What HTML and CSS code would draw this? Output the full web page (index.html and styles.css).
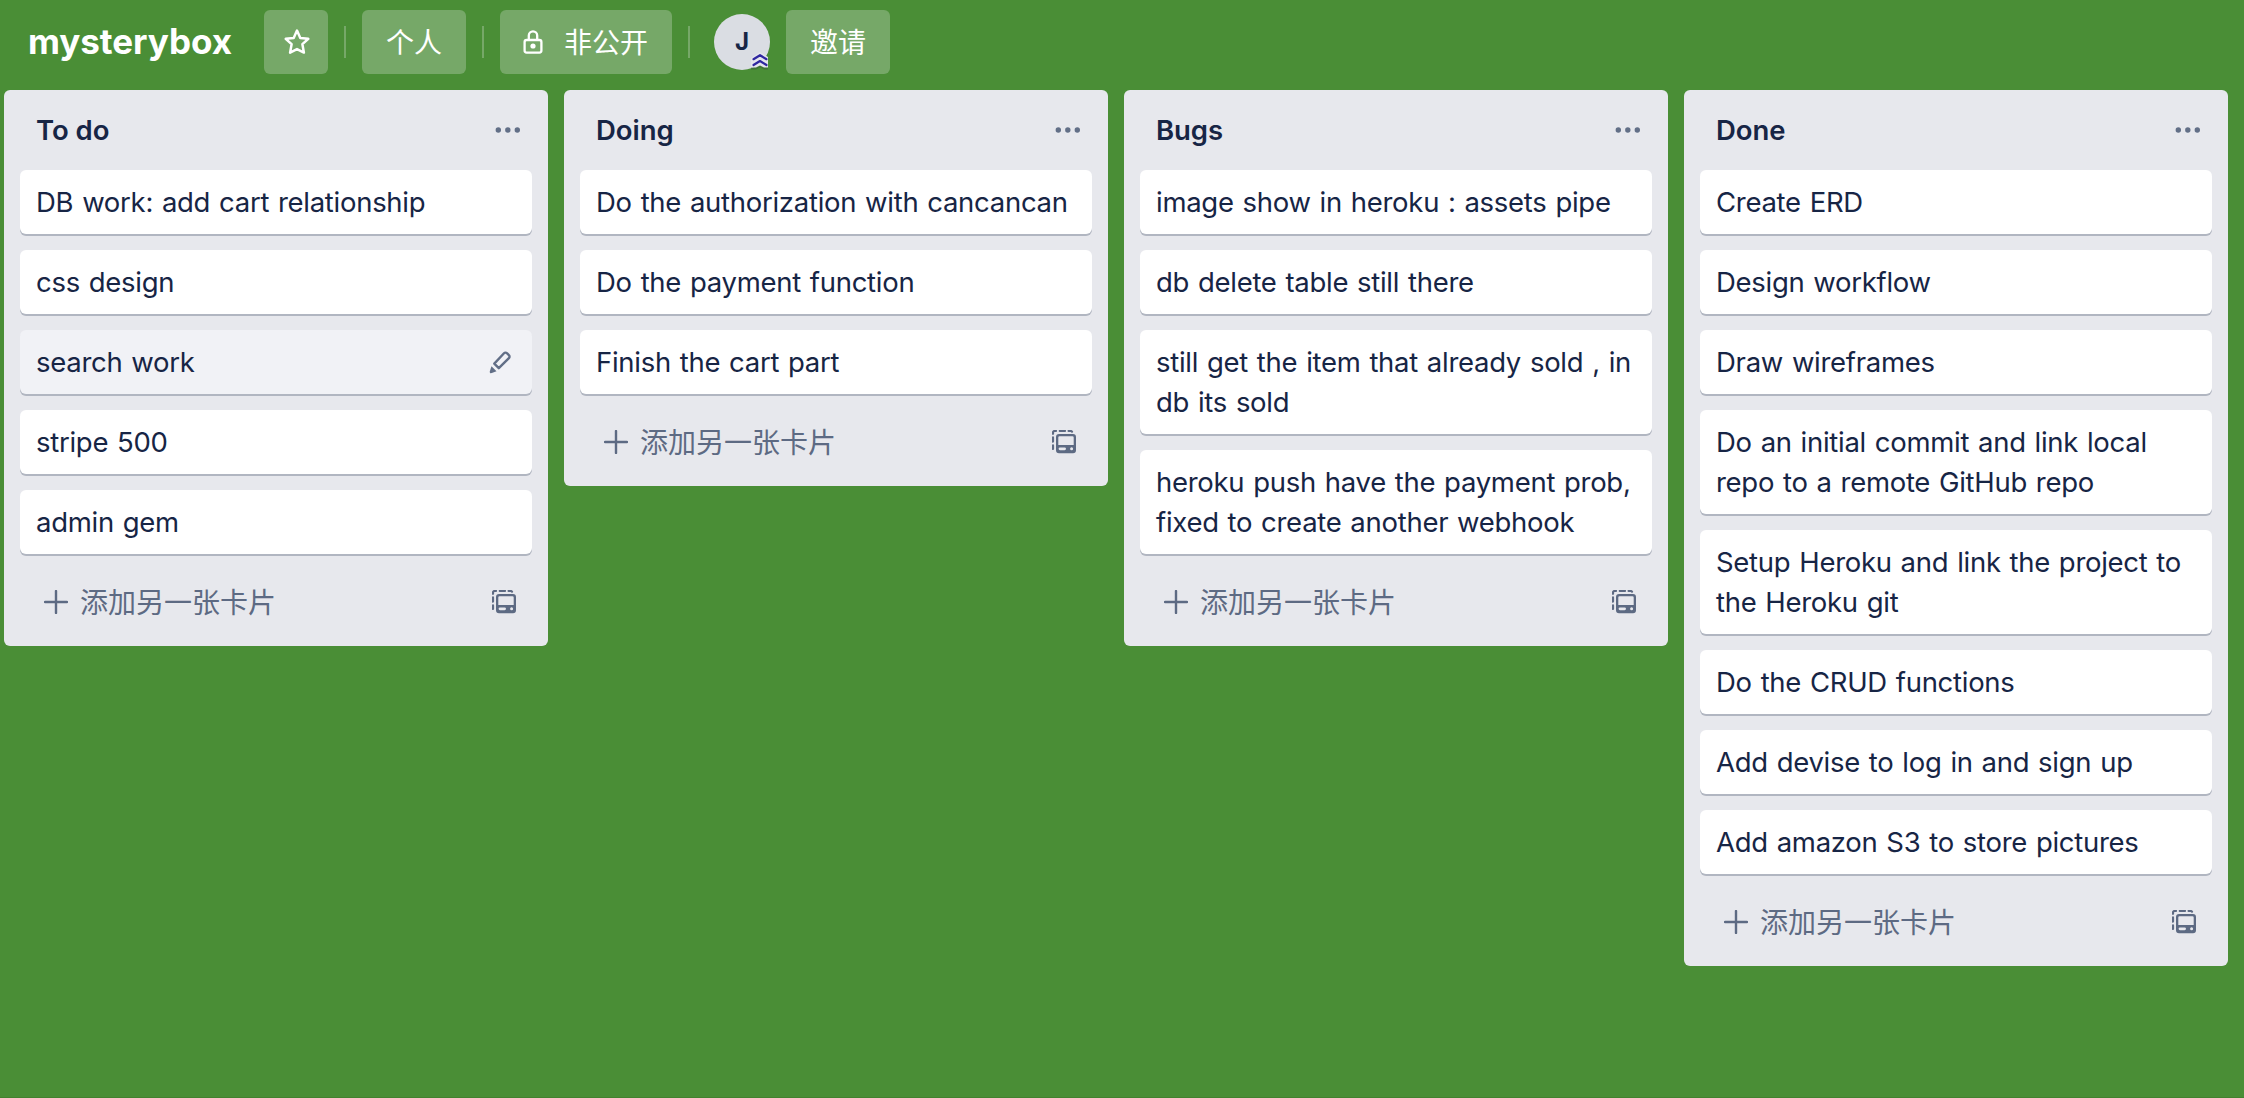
FILE: index.html
```html
<!DOCTYPE html>
<html lang="zh-CN">
<head>
<meta charset="utf-8">
<title>mysterybox</title>
<link rel="stylesheet" href="styles.css">
</head>
<body>
<svg class="sprite" aria-hidden="true">
  <symbol id="i-dots" viewBox="0 0 26 8"><circle cx="3.3" cy="4" r="2.7"/><circle cx="12.800" cy="4" r="2.7"/><circle cx="22.300" cy="4" r="2.7"/></symbol>
  <symbol id="i-plus" viewBox="0 0 24 24"><path d="M12 1v22M1 12h22" fill="none" stroke="currentColor" stroke-width="2.400" stroke-linecap="round"/></symbol>
  <symbol id="i-template" viewBox="0 0 24 24">
    <path fill-rule="evenodd" d="M7 4h14a3 3 0 0 1 3 3v13.300a3 3 0 0 1-3 3H7a3 3 0 0 1-3-3V7a3 3 0 0 1 3-3zM7.500 6.200A1.200 1.200 0 0 0 6.300 7.400v7.600h15.400V7.400A1.200 1.200 0 0 0 20.500 6.200zM8 17.400a1.400 1.400 0 0 0 0 2.800h4.600a1.400 1.400 0 0 0 0-2.800zM19.600 17.300a1.500 1.500 0 1 0 0 3 1.500 1.500 0 0 0 0-3z"/>
    <path d="M1 3.800V2.600A1.600 1.600 0 0 1 2.600 1H4M7.800 1h5.200M16.600 1h2.200a1.600 1.600 0 0 1 1.200.7M1 7.400v4.200M1 15.400v3.600" fill="none" stroke="currentColor" stroke-width="2.200" stroke-linecap="round"/>
  </symbol>
</svg>

<header class="board-header">
  <h1 class="board-name">mysterybox</h1>
  <button class="btn btn-star"><svg class="icon-star" viewBox="0 0 28 28"><path d="M14 2.600l3.300 7.300 8 .9-5.900 5.400 1.500 8.400-6.900-3.500-6.900 3.500 1.500-8.400-5.900-5.400 8-.9z" fill="none" stroke="currentColor" stroke-width="2.500" stroke-linejoin="round"/></svg></button>
  <span class="divider"></span>
  <button class="btn"><span class="label">个人</span></button>
  <span class="divider"></span>
  <button class="btn btn-private"><svg class="icon-lock" viewBox="0 0 20 26"><path d="M5.800 11V6.500a4.200 4.200 0 0 1 8.400 0V11" fill="none" stroke="currentColor" stroke-width="2.300"/><rect x="1.600" y="11" width="16.800" height="12.600" rx="2" fill="none" stroke="currentColor" stroke-width="2.300"/><circle cx="10" cy="17" r="2.600" fill="currentColor"/></svg><span class="label">非公开</span></button>
  <span class="divider"></span>
  <div class="avatar">J
    <svg class="avatar-badge" viewBox="0 0 20 18"><path class="badge-shade" d="M3 8L11 1l8 5v11.500h-4L11 15.500l-4 2H2V9z"/><path class="badge-plate" d="M2 6L11 0l8 5v10.500h-4L11 13.500l-4 2H2z"/><path class="badge-mark" d="M4.500 7.200L11 3.200l6.500 4M4.500 13L11 9l6.500 4"/></svg>
  </div>
  <button class="btn"><span class="label">邀请</span></button>
</header>

<main class="board">
  <section class="list">
    <div class="list-header"><h2>To do</h2><svg class="icon-dots"><use href="#i-dots"/></svg></div>
    <div class="cards">
      <article class="card">DB work: add cart relationship</article>
      <article class="card">css design</article>
      <article class="card card-hover">search work<svg class="icon-pencil" viewBox="0 0 24 24"><path d="M6.300 13.600L16 3.200a2 2 0 0 1 2.900 0l2 2a2 2 0 0 1 0 2.900L10.800 18.200z" fill="none" stroke="currentColor" stroke-width="2.400" stroke-linejoin="round"/><path d="M3.500 16.200l5 5-4.700 1.900c-1.400.5-2.400-.5-2-1.900z" fill="currentColor"/></svg></article>
      <article class="card">stripe 500</article>
      <article class="card">admin gem</article>
    </div>
    <div class="composer"><svg class="icon-plus"><use href="#i-plus"/></svg><span class="label">添加另一张卡片</span><svg class="icon-template"><use href="#i-template"/></svg></div>
  </section>

  <section class="list">
    <div class="list-header"><h2>Doing</h2><svg class="icon-dots"><use href="#i-dots"/></svg></div>
    <div class="cards">
      <article class="card">Do the authorization with cancancan</article>
      <article class="card">Do the payment function</article>
      <article class="card">Finish the cart part</article>
    </div>
    <div class="composer"><svg class="icon-plus"><use href="#i-plus"/></svg><span class="label">添加另一张卡片</span><svg class="icon-template"><use href="#i-template"/></svg></div>
  </section>

  <section class="list">
    <div class="list-header"><h2>Bugs</h2><svg class="icon-dots"><use href="#i-dots"/></svg></div>
    <div class="cards">
      <article class="card">image show in heroku : assets pipe</article>
      <article class="card">db delete table still there</article>
      <article class="card">still get the item that already sold , in<br>db its sold</article>
      <article class="card">heroku push have the payment prob,<br>fixed to create another webhook</article>
    </div>
    <div class="composer"><svg class="icon-plus"><use href="#i-plus"/></svg><span class="label">添加另一张卡片</span><svg class="icon-template"><use href="#i-template"/></svg></div>
  </section>

  <section class="list">
    <div class="list-header"><h2>Done</h2><svg class="icon-dots"><use href="#i-dots"/></svg></div>
    <div class="cards">
      <article class="card">Create ERD</article>
      <article class="card">Design workflow</article>
      <article class="card">Draw wireframes</article>
      <article class="card">Do an initial commit and link local<br>repo to a remote GitHub repo</article>
      <article class="card">Setup Heroku and link the project to<br>the Heroku git</article>
      <article class="card">Do the CRUD functions</article>
      <article class="card">Add devise to log in and sign up</article>
      <article class="card">Add amazon S3 to store pictures</article>
    </div>
    <div class="composer"><svg class="icon-plus"><use href="#i-plus"/></svg><span class="label">添加另一张卡片</span><svg class="icon-template"><use href="#i-template"/></svg></div>
  </section>
</main>
</body>
</html>
```
FILE: styles.css
```css
* { box-sizing: border-box; }

body {
  margin: 0;
  height: 1098px;
  overflow: hidden;
  background: #4a8e36;
  border-bottom: 1px solid #43812f;
  color: #172545;
  font: 27.5px/40px Inter, "Noto Sans CJK SC", sans-serif;
}

h1, h2 { margin: 0; }
svg { display: block; flex: none; fill: currentColor; }
.sprite { display: none; }

.board-header {
  display: flex;
  align-items: center;
  gap: 16px;
  height: 90px;
  padding: 0 28px 6px;
  color: #fff;
}
.board-name {
  width: 220px;
  padding-bottom: 2px;
  font-size: 35px;
  font-weight: 700;
  line-height: 40px;
  letter-spacing: -0.05px;
  white-space: nowrap;
}
.btn {
  display: flex;
  align-items: center;
  height: 64px;
  padding: 0 24px;
  border: 0;
  border-radius: 6px;
  background: #76a868;
  color: #fff;
  font: 28px/40px "Noto Sans CJK SC", sans-serif;
  white-space: nowrap;
}
.label { padding-bottom: 2px; }
.btn-star { width: 64px; padding: 0 19px; }
.icon-star { width: 28px; height: 28px; }
.icon-lock { width: 20px; height: 26px; margin: 0 21px 0 -1px; }
.divider { width: 2px; height: 32px; background: #76a868; }

.avatar {
  position: relative;
  width: 56px;
  height: 56px;
  margin-left: 8px;
  border-radius: 50%;
  background: #dadde3;
  color: #172545;
  font-size: 24px;
  font-weight: 700;
  line-height: 55px;
  text-align: center;
}
.avatar-badge {
  position: absolute;
  left: 35px;
  top: 38px;
  width: 20px;
  height: 18px;
}
.badge-shade { fill: #3a5a35; opacity: .5; }
.badge-plate { fill: #e4e5ec; }
.badge-mark { fill: none; stroke: #2f27a0; stroke-width: 2.2; stroke-linecap: round; stroke-linejoin: round; }

.board {
  display: flex;
  align-items: flex-start;
  gap: 16px;
  padding-left: 4px;
}
.list {
  flex: none;
  width: 544px;
  border-radius: 6px;
  background: #e7e8ed;
}
.list-header {
  display: flex;
  align-items: center;
  justify-content: space-between;
  height: 80px;
  padding: 0 27px 0 32px;
}
.list-header h2 {
  font-size: 27.5px;
  font-weight: 640;
  line-height: 40px;
  letter-spacing: -0.05px;
}
.icon-dots { width: 26px; height: 8px; color: #626f87; }

.cards {
  display: flex;
  flex-direction: column;
  gap: 16px;
  padding: 0 16px;
}
.card {
  display: flow-root;
  padding: 12px 16px;
  border-radius: 6px;
  background: #fff;
  box-shadow: 0 2px 0 #b1b6c1;
  letter-spacing: -0.28px;
  word-spacing: 1.4px;
  white-space: nowrap;
}
.card-hover {
  display: flex;
  align-items: center;
  justify-content: space-between;
  padding-right: 20px;
  background: #f1f2f6;
}
.icon-pencil { width: 24px; height: 24px; color: #626f87; }

.composer {
  display: flex;
  align-items: center;
  height: 92px;
  padding: 4px 32px 0 40px;
  color: #5d6a83;
  font: 28px/40px "Noto Sans CJK SC", sans-serif;
}
.icon-plus { width: 24px; height: 24px; margin-right: 12px; }
.icon-template { width: 24px; height: 24px; margin-left: auto; }
```
